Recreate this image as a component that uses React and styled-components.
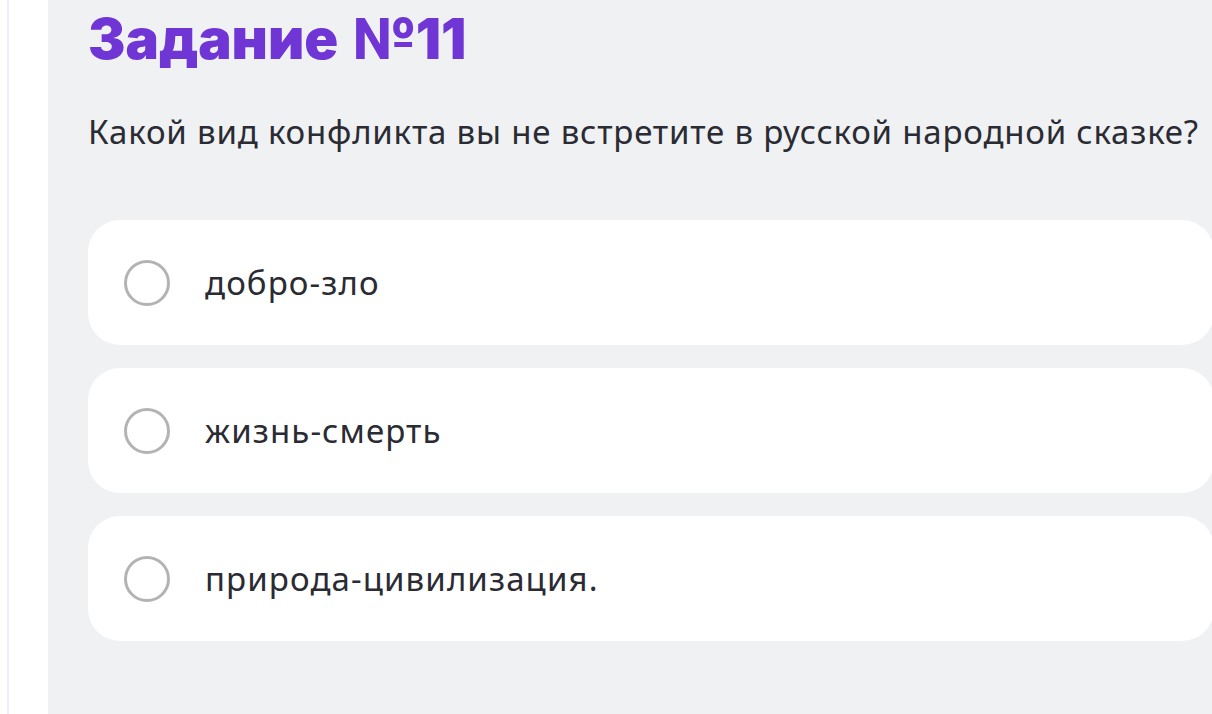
import React, { useState } from 'react';
import styled, { createGlobalStyle } from 'styled-components';

const GlobalStyle = createGlobalStyle`
  html, body {
    margin: 0;
    padding: 0;
    background: #ffffff;
    overflow: hidden;
  }
  body {
    font-family: 'Noto Sans', 'Open Sans', sans-serif;
  }
`;

const Page = styled.div`
  display: flex;
  height: 714px;
  padding-left: 7px;
  box-sizing: border-box;
`;

const EdgeLine = styled.div`
  width: 2px;
  flex-shrink: 0;
  background: #f1effb;
  margin-right: 39px;
`;

const Panel = styled.section`
  width: 1166px;
  flex-shrink: 0;
  background: #f0f1f3;
  padding: 8px 0 0 40px;
  box-sizing: border-box;
`;

const Title = styled.h1`
  margin: 0;
  font-family: Inter, 'Noto Sans', sans-serif;
  font-weight: 900;
  font-size: 56px;
  line-height: 62px;
  color: #7035d5;
  word-spacing: 4px;
`;

const Question = styled.p`
  margin: 40px 0 0;
  font-size: 33px;
  line-height: 44px;
  letter-spacing: 0.8px;
  color: #2a2b33;
`;

const Options = styled.div`
  display: flex;
  flex-direction: column;
  gap: 23px;
  margin-top: 66px;
`;

const Option = styled.label`
  display: flex;
  align-items: center;
  gap: 35px;
  height: 125px;
  padding-left: 36px;
  background: #ffffff;
  border-radius: 32px;
  box-sizing: border-box;
  cursor: pointer;
`;

const Radio = styled.span`
  width: 46px;
  height: 46px;
  border-radius: 50%;
  border: 3px solid ${(p) => (p.checked ? '#7035d5' : '#b3b3b3')};
  box-sizing: border-box;
  flex-shrink: 0;
`;

const OptionText = styled.span`
  font-size: 33px;
  letter-spacing: 1.1px;
  color: #2a2b33;
`;

const answers = ['добро-зло', 'жизнь-смерть', 'природа-цивилизация.'];

const App = () => {
  const [picked, setPicked] = useState(null);

  return (
    <>
      <GlobalStyle />
      <Page>
        <EdgeLine />
        <Panel>
          <Title>Задание №11</Title>
          <Question>Какой вид конфликта вы не встретите в русской народной сказке?</Question>
          <Options>
            {answers.map((a, i) => (
              <Option key={a} onClick={() => setPicked(i)}>
                <Radio checked={picked === i} />
                <OptionText>{a}</OptionText>
              </Option>
            ))}
          </Options>
        </Panel>
      </Page>
    </>
  );
};

export default App;
